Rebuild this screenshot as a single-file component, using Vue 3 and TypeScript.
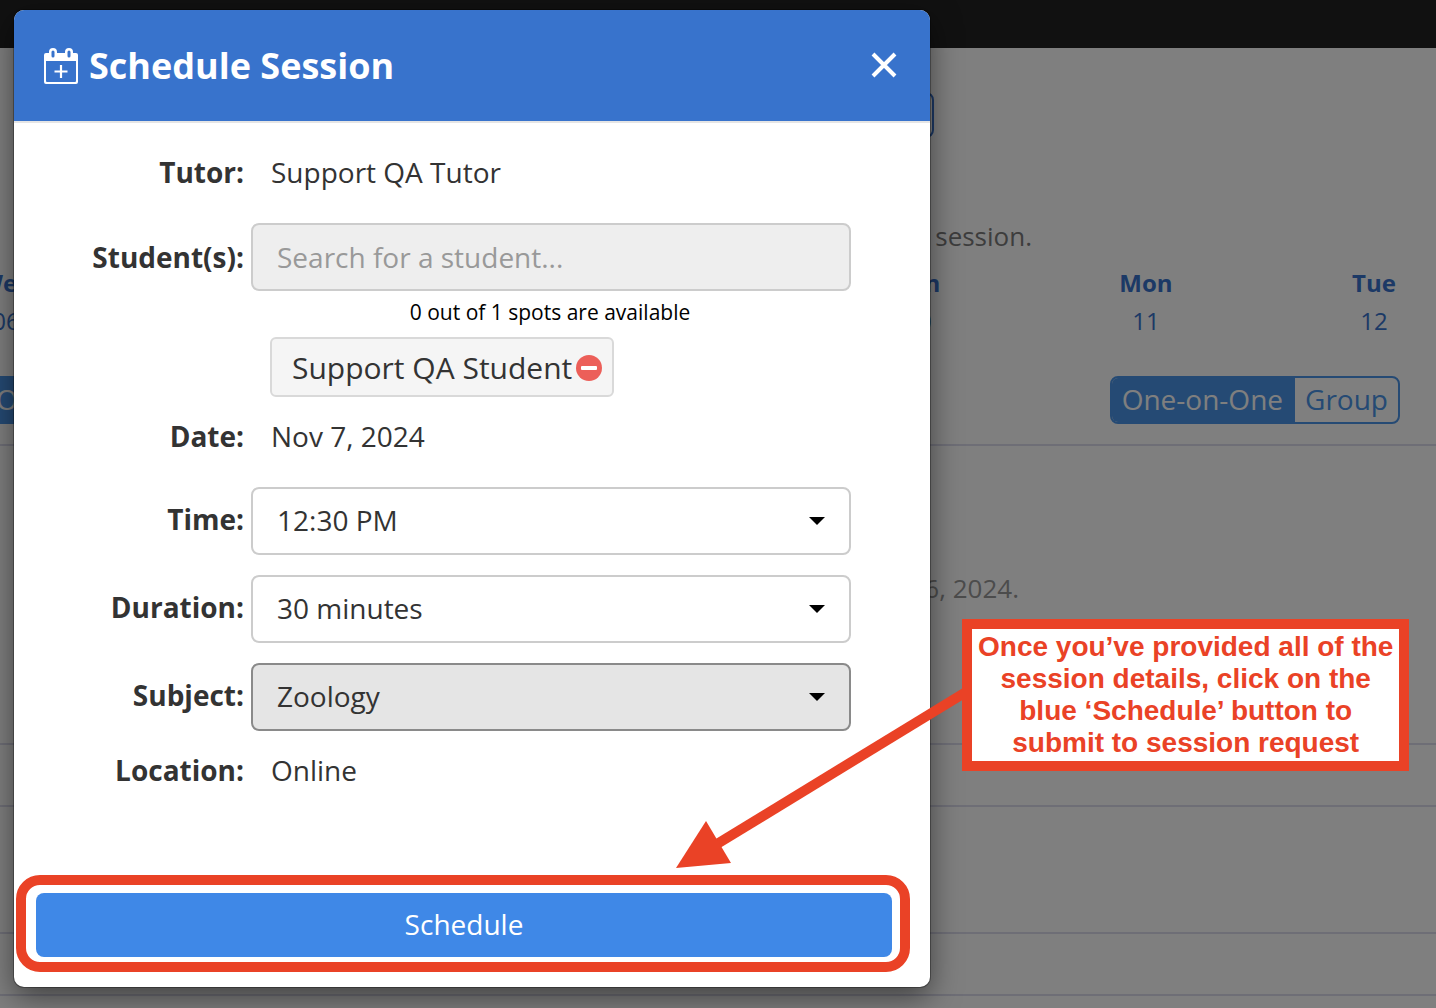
<script setup lang="ts">
import { ref } from 'vue'

interface Day {
  name: string
  date: string
  column: number
}

interface SelectField {
  id: string
  label: string
  options: string[]
  active: boolean
}

const days: Day[] = [
  { name: 'Wed', date: '06', column: 1 },
  { name: 'Sun', date: '10', column: 5 },
  { name: 'Mon', date: '11', column: 6 },
  { name: 'Tue', date: '12', column: 7 },
]

const fields: SelectField[] = [
  { id: 'time', label: 'Time:', options: ['12:30 PM', '1:00 PM'], active: false },
  { id: 'duration', label: 'Duration:', options: ['30 minutes', '60 minutes'], active: false },
  { id: 'subject', label: 'Subject:', options: ['Zoology', 'Biology'], active: true },
]

const values = ref<Record<string, string>>({
  time: '12:30 PM',
  duration: '30 minutes',
  subject: 'Zoology',
})
</script>

<template>
  <div class="screen">
    <div class="page">
      <div class="topbar"></div>
      <div class="picker"></div>
      <p class="intro">session.</p>
      <div class="week">
        <div v-for="day in days" :key="day.name" class="day" :style="{ gridColumn: day.column }">
          <strong>{{ day.name }}</strong>
          <span>{{ day.date }}</span>
        </div>
      </div>
      <div class="toggles">
        <div class="toggle">
          <button type="button" class="on">One-on-One</button>
          <button type="button">Group</button>
        </div>
        <div class="toggle">
          <button type="button" class="on">One-on-One</button>
          <button type="button">Group</button>
        </div>
      </div>
      <div class="slot slot-first">
        <p class="empty">6, 2024.</p>
      </div>
      <div class="slot slot-short"></div>
      <div class="slot slot-tall"></div>
      <div class="slot slot-short"></div>
      <div class="slot"></div>
    </div>

    <div class="backdrop">
      <section class="modal" role="dialog" aria-labelledby="modal-title">
        <header class="modal-head">
          <svg class="cal" viewBox="0 0 34 36" width="34" height="36" aria-hidden="true">
            <path
              fill="#fff"
              fill-rule="evenodd"
              d="M2 5H5V4a4 4 0 0 1 8 0V5h8V4a4 4 0 0 1 8 0V5h3a2 2 0 0 1 2 2V34a2 2 0 0 1-2 2H2a2 2 0 0 1-2-2V7a2 2 0 0 1 2-2ZM2 13V33a1 1 0 0 0 1 1H31a1 1 0 0 0 1-1V13ZM7.500 4V8a1.500 1.500 0 0 0 3 0V4a1.500 1.500 0 0 0-3 0ZM23.500 4V8a1.500 1.500 0 0 0 3 0V4a1.500 1.500 0 0 0-3 0Z"
            />
            <path d="M17 17V30M10.500 23.500H23.500" stroke="#fff" stroke-width="2.200" fill="none" />
          </svg>
          <h1 id="modal-title">Schedule Session</h1>
          <button type="button" class="close" aria-label="Close">
            <svg viewBox="0 0 26 26" width="26" height="26" aria-hidden="true">
              <path d="M2 2L24 24M24 2L2 24" stroke="#fff" stroke-width="4" fill="none" />
            </svg>
          </button>
        </header>

        <form class="form" @submit.prevent>
          <div class="row text-row">
            <span class="label">Tutor:</span>
            <span class="value">Support QA Tutor</span>
          </div>
          <div class="row first-control">
            <label class="label" for="student">Student(s):</label>
            <input id="student" class="control search" type="text" placeholder="Search for a student..." />
          </div>
          <div class="students">
            <p class="hint">0 out of 1 spots are available</p>
            <div class="chip">
              <span>Support QA Student</span>
              <button type="button" aria-label="Remove Support QA Student">
                <svg viewBox="0 0 26 26" width="26" height="26" aria-hidden="true">
                  <circle cx="13" cy="13" r="13" fill="#ec5f59" />
                  <rect x="5" y="11" width="16" height="4" rx="1" fill="#fff" />
                </svg>
              </button>
            </div>
          </div>
          <div class="row text-row date-row">
            <span class="label">Date:</span>
            <span class="value">Nov 7, 2024</span>
          </div>
          <div v-for="field in fields" :key="field.id" class="row select-row">
            <label class="label" :for="field.id">{{ field.label }}</label>
            <div class="select">
              <select :id="field.id" v-model="values[field.id]" class="control" :class="{ active: field.active }">
                <option v-for="option in field.options" :key="option">{{ option }}</option>
              </select>
              <svg class="caret" viewBox="0 0 16 8" width="16" height="8" aria-hidden="true">
                <path d="M0 0H16L8 8Z" />
              </svg>
            </div>
          </div>
          <div class="row text-row">
            <span class="label">Location:</span>
            <span class="value">Online</span>
          </div>
          <div class="highlight">
            <button type="submit" class="submit">Schedule</button>
          </div>
        </form>
      </section>
    </div>

    <svg class="arrow" viewBox="0 0 300 190" width="300" height="190" aria-hidden="true">
      <path d="M296 12L47 164" stroke="#ea4226" stroke-width="10" fill="none" />
      <path d="M6 188L36 141L61 183Z" fill="#ea4226" />
    </svg>
    <aside class="callout">
      Once you’ve provided all of the<br />session details, click on the<br />blue ‘Schedule’ button to<br />submit to session request
    </aside>
  </div>
</template>

<style>
body {
  margin: 0;
}
</style>

<style scoped>
* {
  box-sizing: border-box;
}

.screen {
  position: relative;
  min-height: 100vh;
  overflow: hidden;
  background: #fff;
  color: #333;
  font-family: 'Open Sans', 'Noto Sans', sans-serif;
  font-size: 28px;
  line-height: 40px;
}

p,
h1 {
  margin: 0;
}

button {
  padding: 0;
  border: 0;
  background: none;
  font: inherit;
}

/* Page behind the dialog */
.topbar {
  height: 48px;
  background: #222;
}

.picker {
  height: 46px;
  margin: 44px 502px 0 400px;
  border: 2px solid #3873cc;
  border-radius: 8px;
}

.intro {
  margin: 78px 404px 0 0;
  color: #7a7a7a;
  font-size: 26px;
  text-align: right;
}

.week {
  display: grid;
  grid-template-columns: repeat(7, 1fr);
  margin: 8px -52px 0 -108px;
  color: #3873cc;
  font-size: 24px;
  line-height: 38px;
  text-align: center;
}

.day {
  display: flex;
  flex-direction: column;
}

.toggles {
  display: flex;
  justify-content: space-between;
  margin: 36px 36px 20px -16px;
}

.toggle {
  display: flex;
  height: 48px;
  border: 2px solid #4a94e8;
  border-radius: 8px;
  overflow: hidden;
}

.toggle button {
  padding: 0 10px 2px;
  color: #4a94e8;
}

.toggle .on {
  padding-right: 12px;
  background: #4a94e8;
  color: #fff;
}

.slot {
  border-top: 2px solid #dcdcec;
}

.slot-first {
  height: 299px;
  padding-top: 122px;
}

.slot-short {
  height: 62px;
}

.slot-tall {
  height: 127px;
}

.empty {
  margin-right: 417px;
  color: #999;
  font-size: 26px;
  text-align: right;
}

/* Dialog */
.backdrop {
  position: absolute;
  inset: 0;
  padding: 10px 14px;
  background: rgba(0, 0, 0, 0.5);
}

.modal {
  max-width: 916px;
  overflow: hidden;
  border-radius: 10px;
  background: #fff;
  box-shadow:
    0 0 0 1px rgba(0, 0, 0, 0.3),
    0 10px 30px rgba(0, 0, 0, 0.5);
}

.modal-head {
  display: flex;
  align-items: center;
  height: 113px;
  padding: 0 33px 0 30px;
  border-bottom: 2px solid #e5e5e5;
  background: #3873cc;
  color: #fff;
}

.modal-head h1 {
  flex: 1;
  margin-left: 11px;
  font-size: 36px;
  line-height: 48px;
}

.close,
.chip button {
  display: flex;
}

.close {
  padding-bottom: 2px;
}

.form {
  padding-top: 30px;
}

.row {
  display: flex;
  align-items: center;
}

.text-row {
  height: 38px;
}

.label {
  flex: none;
  width: 230px;
  font-weight: 700;
  text-align: right;
}

.value {
  margin-left: 27px;
}

.first-control {
  margin-top: 32px;
}

.control {
  display: block;
  width: 100%;
  height: 68px;
  padding: 0 24px;
  border: 2px solid #ccc;
  border-radius: 8px;
  background: #fff;
  color: #333;
  font: inherit;
  appearance: none;
}

.control.active {
  border-color: #8a8a8a;
  background: #e5e5e5;
}

.search {
  max-width: 600px;
  margin-left: 7px;
  background: #eee;
}

.search::placeholder {
  color: #999;
  opacity: 1;
}

.students {
  max-width: 600px;
  margin-left: 237px;
}

.hint {
  padding: 5px 2px 9px 0;
  color: #000;
  font-size: 21px;
  line-height: 32px;
  text-align: center;
}

.chip {
  display: inline-flex;
  align-items: center;
  gap: 4px;
  height: 60px;
  margin-left: 19px;
  padding: 2px 10px 0 20px;
  border: 2px solid #d9d9d9;
  border-radius: 6px;
  background: #f5f5f5;
  font-size: 30px;
  vertical-align: top;
}

.date-row {
  margin: 20px 0 32px;
}

.select-row {
  margin-bottom: 20px;
}

.select-row .label {
  padding-bottom: 5px;
}

.select {
  position: relative;
  flex: 1;
  max-width: 600px;
  margin-left: 7px;
}

.select .control {
  padding-bottom: 2px;
}

.caret {
  position: absolute;
  top: 30px;
  right: 26px;
  pointer-events: none;
}

.highlight {
  margin: 86px 20px 15px 2px;
  padding: 8px 8px 5px 10px;
  border: 10px solid #ea4226;
  border-radius: 24px;
}

.submit {
  display: block;
  width: 100%;
  height: 64px;
  padding-bottom: 2px;
  border-radius: 8px;
  background: #3f88e7;
  color: #fff;
}

/* Annotation */
.arrow {
  position: absolute;
  top: 680px;
  left: 670px;
}

.callout {
  position: absolute;
  top: 619px;
  left: 962px;
  padding: 2px 6px;
  border: 10px solid #ea4226;
  background: #fff;
  color: #ea4226;
  font-family: 'Liberation Sans', Arial, sans-serif;
  font-size: 28px;
  font-weight: 700;
  line-height: 32px;
  text-align: center;
  white-space: nowrap;
}
</style>
